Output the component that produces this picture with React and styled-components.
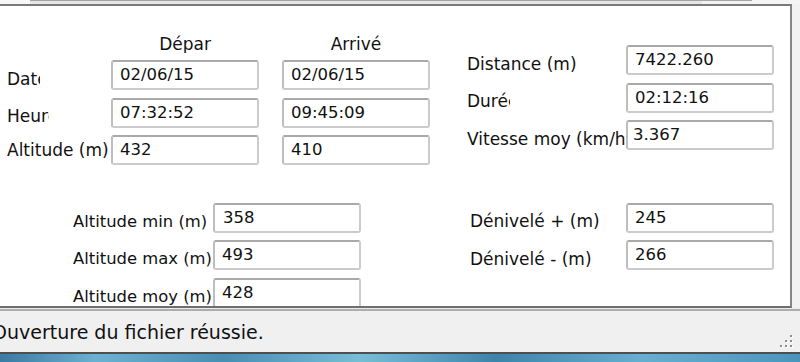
import React from 'react'
import styled, { createGlobalStyle } from 'styled-components'

const Global = createGlobalStyle`
  html, body {
    margin: 0;
    padding: 0;
    background: #ececec;
  }
`

const Window = styled.div`
  width: 800px;
  height: 362px;
  display: flex;
  flex-direction: column;
  overflow: hidden;
  background: #ececec;
  font-family: "DejaVu Sans", "Noto Sans", sans-serif;
  color: #111;
`

const TopStrip = styled.div`
  height: 4px;
  display: flex;
`

const StripSeg = styled.div`
  width: ${p => p.$w ? p.$w + 'px' : 'auto'};
  flex: ${p => p.$w ? 'none' : 1};
  background: ${p => p.$bg};
  border-top: ${p => p.$line ? '1px solid #a3a3a3' : 'none'};
  box-sizing: border-box;
`

const Main = styled.div`
  height: 304px;
  display: flex;
`

const Panel = styled.div`
  width: 792px;
  box-sizing: border-box;
  background: #fff;
  border-top: 2px solid #7a7a7a;
  border-right: 2px solid #868686;
  border-bottom: 2px solid #6e6e6e;
  overflow: hidden;
  display: flex;
  flex-direction: column;
`

const FrameEdge = styled.div`
  flex: 1;
  background: #f2f2f2;
`

const Row = styled.div`
  display: flex;
  align-items: flex-start;
  padding-left: ${p => p.$pad || 0}px;
  margin-top: ${p => p.$top || 0}px;
  flex: none;
`

const Group = styled.div`
  display: grid;
  grid-template-columns: ${p => p.$cols};
  grid-auto-rows: 30px;
  grid-template-rows: ${p => p.$header ? '24px' : 'none'};
  row-gap: 7.5px;
  margin-left: ${p => p.$left || 0}px;
  margin-top: ${p => p.$top || 0}px;
`

const Header = styled.div`
  width: 148px;
  font-size: 17px;
  text-align: center;
  padding-top: 5px;
  box-sizing: border-box;
  height: 24px;
  overflow: hidden;
  white-space: nowrap;
`

const Label = styled.div`
  font-size: ${p => p.$size || 17}px;
  height: 30px;
  box-sizing: border-box;
  padding-top: ${p => (p.$drop ?? 3.5) * 2}px;
  display: flex;
  align-items: center;
  white-space: nowrap;
  overflow: hidden;
  max-width: ${p => p.$clip ? p.$clip + 'px' : 'none'};
`

const Field = styled.input`
  width: 148px;
  height: 30px;
  box-sizing: border-box;
  margin: 0;
  padding: 0 0 1px ${p => p.$pad ?? 7}px;
  border: 2px solid #cbcbcb;
  border-top-color: #a9a9a9;
  border-left-color: #bebebe;
  border-radius: 3px;
  background: #fff;
  font-family: "DejaVu Sans", "Noto Sans", sans-serif;
  font-size: 16.5px;
  color: #111;
  outline: none;
`

const StatusBar = styled.div`
  margin-top: 1px;
  height: 45px;
  box-sizing: border-box;
  border-top: 2px solid #adadad;
  border-bottom: 2px solid #4f4f4f;
  background: #f0f0f0;
  display: flex;
  align-items: center;
`

const StatusText = styled.span`
  font-size: 19px;
  margin-left: -8px;
  white-space: nowrap;
`

const Grip = styled.svg`
  margin-left: auto;
  margin-right: 5px;
  align-self: flex-end;
  margin-bottom: 2px;
`

const Aero = styled.div`
  flex: 1;
  background: linear-gradient(90deg, #3b7aa2 0%, #6db0d0 12%, #4a8db3 28%, #79bcd9 45%, #3f83ab 62%, #68aed0 80%, #4b95bd 100%);
`

const topLeft = [
  { label: 'Date', clip: 33, dep: '02/06/15', arr: '02/06/15' },
  { label: 'Heure', clip: 42, dep: '07:32:52', arr: '09:45:09' },
  { label: 'Altitude (m)', drop: 0, dep: '432', arr: '410' },
]

const topRight = [
  { label: 'Distance (m)', value: '7422.260' },
  { label: 'Durée', clip: 43, value: '02:12:16' },
  { label: 'Vitesse moy (km/h)', clip: 159, value: '3.367', pad: 5 },
]

const bottomLeft = [
  { label: 'Altitude min (m)', value: '358', pad: 8 },
  { label: 'Altitude max (m)', value: '493' },
  { label: 'Altitude moy (m)', value: '428' },
]

const bottomRight = [
  { label: 'Dénivelé + (m)', value: '245' },
  { label: 'Dénivelé - (m)', value: '266' },
]

function Dot({ x, y }) {
  return (
    <>
      <rect x={x + 1} y={y + 1} width="2" height="2" fill="#ffffff" />
      <rect x={x} y={y} width="2" height="2" fill="#8e8e8e" />
    </>
  )
}

function App() {
  return (
    <>
      <Global />
      <Window>
        <TopStrip>
          <StripSeg $w={30} $bg="#f7f7f7" />
          <StripSeg $w={672} $bg="#e6e6e6" $line />
          <StripSeg $w={50} $bg="#f3f3f3" $line />
          <StripSeg $bg="#f5f5f5" />
        </TopStrip>
        <Main>
          <Panel>
            <Row $pad={7}>
              <Group $cols="104px 171px 148px" $header $top={22.5}>
                <span />
                <Header>Dépar</Header>
                <Header>Arrivé</Header>
                {topLeft.map(r => (
                  <React.Fragment key={r.label}>
                    <Label $clip={r.clip} $drop={r.drop}>{r.label}</Label>
                    <Field readOnly value={r.dep} />
                    <Field readOnly value={r.arr} />
                  </React.Fragment>
                ))}
              </Group>
              <Group $cols="159px 148px" $left={37} $top={39}>
                {topRight.map(r => (
                  <React.Fragment key={r.label}>
                    <Label $clip={r.clip}>{r.label}</Label>
                    <Field readOnly value={r.value} $pad={r.pad} />
                  </React.Fragment>
                ))}
              </Group>
            </Row>
            <Row $top={37.5}>
              <Group $cols="140px 148px" $left={73}>
                {bottomLeft.map(r => (
                  <React.Fragment key={r.label}>
                    <Label $size={16.4} $clip={141}>{r.label}</Label>
                    <Field readOnly value={r.value} $pad={r.pad} />
                  </React.Fragment>
                ))}
              </Group>
              <Group $cols="156px 148px" $left={109}>
                {bottomRight.map(r => (
                  <React.Fragment key={r.label}>
                    <Label>{r.label}</Label>
                    <Field readOnly value={r.value} />
                  </React.Fragment>
                ))}
              </Group>
            </Row>
          </Panel>
          <FrameEdge />
        </Main>
        <StatusBar>
          <StatusText>Ouverture du fichier réussie.</StatusText>
          <Grip width="18" height="18" viewBox="0 0 18 18">
            <Dot x={13} y={3} />
            <Dot x={8} y={8} />
            <Dot x={13} y={8} />
            <Dot x={3} y={13} />
            <Dot x={8} y={13} />
            <Dot x={13} y={13} />
          </Grip>
        </StatusBar>
        <Aero />
      </Window>
    </>
  )
}

export default App
